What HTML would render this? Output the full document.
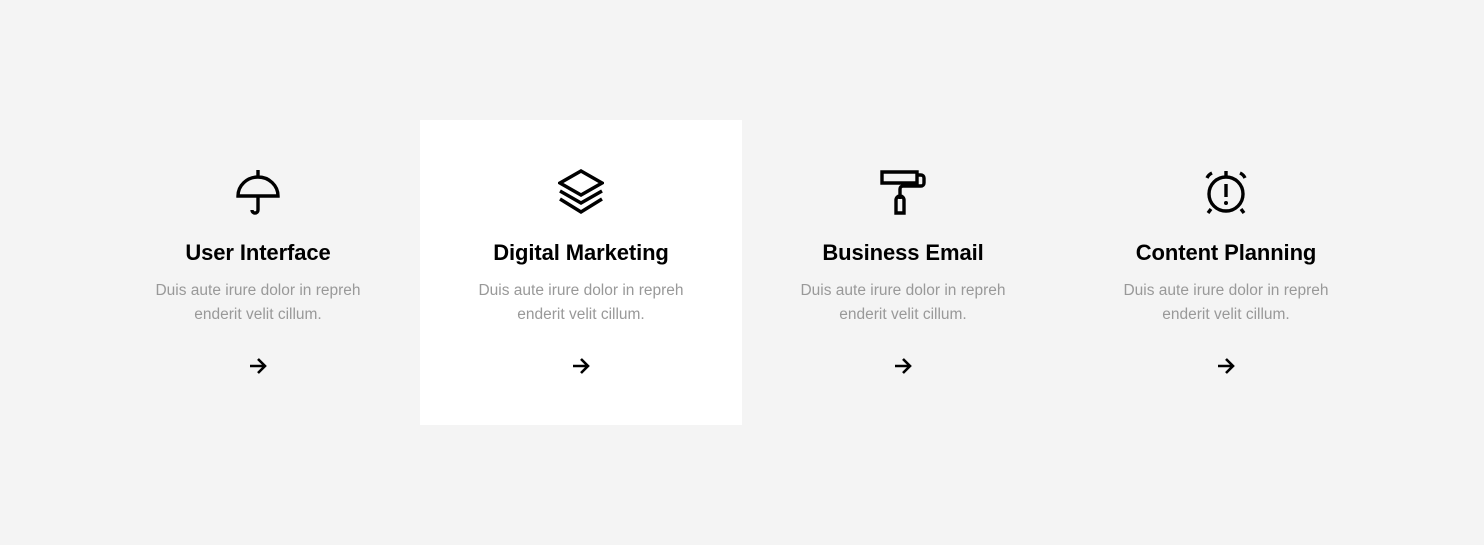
<!DOCTYPE html>
<html><head><meta charset="utf-8"><style>
html,body{margin:0;padding:0;background:#f4f4f4;width:1484px;height:545px;overflow:hidden;font-family:"Liberation Sans",sans-serif}
.col{position:absolute;top:120px;width:322px;height:305px;text-align:center}
.col.w{background:#fff}
.ic{position:absolute;left:138px;top:49px;width:46px;height:46px}
h3{position:absolute;top:120px;left:0;right:0;margin:0;font-size:22px;font-weight:bold;color:#000;letter-spacing:-0.1px}
p{position:absolute;top:159px;left:0;right:0;margin:0;font-size:15.5px;line-height:24px;color:#999}
.ar{position:absolute;left:152px;top:238px}
</style></head><body>
<div class="col" style="left:97px">
<svg class="ic" viewBox="0 0 46 46" fill="none" stroke="#000" stroke-width="3.4"><path d="M23 1v7M3 27A20 19 0 0 1 43 27Z M23 27v14a3 3 0 0 1-6 0"/></svg>
<h3>User Interface</h3><p>Duis aute irure dolor in repreh<br>enderit velit cillum.</p>
<svg class="ar" width="18" height="16" viewBox="0 0 18 16" fill="none" stroke="#000" stroke-width="2.6"><path d="M1 8h15M9 1l7 7-7 7"/></svg></div>
<div class="col w" style="left:420px">
<svg class="ic" viewBox="0 0 46 46" fill="none" stroke="#000" stroke-width="3.4"><path d="M23 2L44 14 23 26 2 14Z M2 22L23 34 44 22 M2 30L23 43 44 30"/></svg>
<h3>Digital Marketing</h3><p>Duis aute irure dolor in repreh<br>enderit velit cillum.</p>
<svg class="ar" width="18" height="16" viewBox="0 0 18 16" fill="none" stroke="#000" stroke-width="2.6"><path d="M1 8h15M9 1l7 7-7 7"/></svg></div>
<div class="col" style="left:742px">
<svg class="ic" viewBox="0 0 46 46" fill="none" stroke="#000" stroke-width="3.4"><path d="M2 3h35v11H2Z M37 6h4a3 3 0 0 1 3 3v5a3 3 0 0 1-3 3H23a3 3 0 0 0-3 3v10 M16 31a4 4 0 0 1 8 0v13h-8Z"/></svg>
<h3>Business Email</h3><p>Duis aute irure dolor in repreh<br>enderit velit cillum.</p>
<svg class="ar" width="18" height="16" viewBox="0 0 18 16" fill="none" stroke="#000" stroke-width="2.6"><path d="M1 8h15M9 1l7 7-7 7"/></svg></div>
<div class="col" style="left:1065px">
<svg class="ic" viewBox="0 0 46 46" fill="none" stroke="#000" stroke-width="3.4"><circle cx="23" cy="25" r="17"/><path d="M23 2v6M4 9a10 10 0 0 1 5-5M42 9a10 10 0 0 0-5-5M8 40l-3 4M38 40l3 4M23 15v13"/><circle cx="23" cy="34" r="2" fill="#000" stroke="none"/></svg>
<h3>Content Planning</h3><p>Duis aute irure dolor in repreh<br>enderit velit cillum.</p>
<svg class="ar" width="18" height="16" viewBox="0 0 18 16" fill="none" stroke="#000" stroke-width="2.6"><path d="M1 8h15M9 1l7 7-7 7"/></svg></div>
</body></html>
